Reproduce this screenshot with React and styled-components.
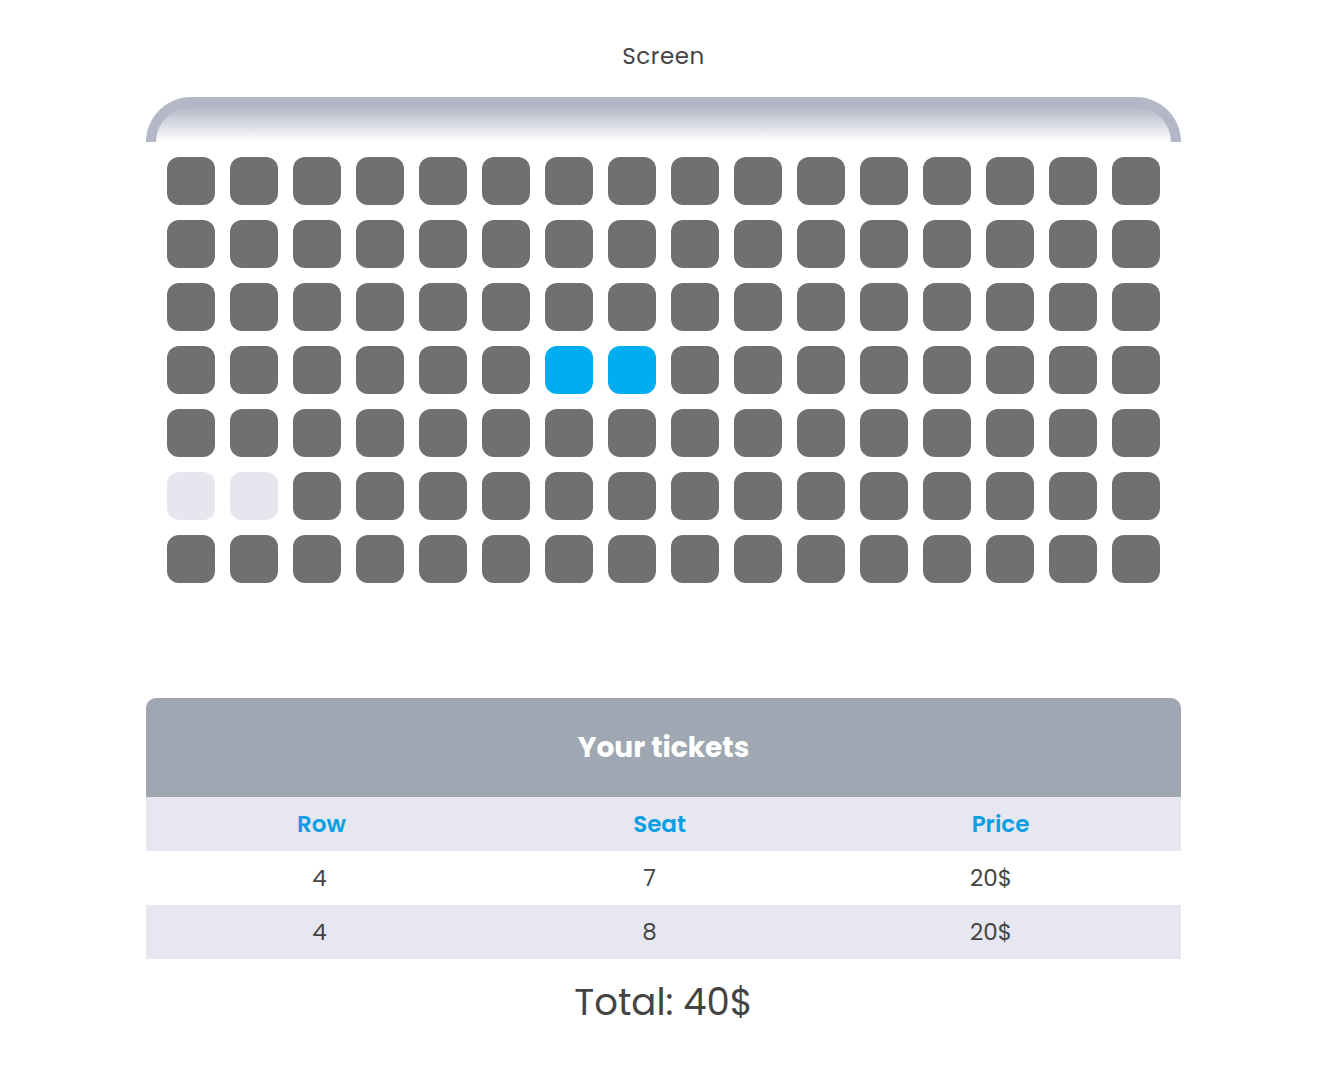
import styled, { createGlobalStyle } from "styled-components";

const GlobalStyle = createGlobalStyle`
  body {
    margin: 0;
    background: #ffffff;
    font-family: Poppins, Inter, "Noto Sans", sans-serif;
    color: #444444;
  }
`;

const Page = styled.div`
  width: 1035px;
  margin: 0 auto;
  padding: 41px 0 40px 4px;
  display: flex;
  flex-direction: column;
  align-items: center;
`;

const ScreenLabel = styled.div`
  font-size: 23px;
  line-height: 30px;
  letter-spacing: 0.5px;
  height: 30px;
`;

const ScreenCurve = styled.div`
  margin-top: 26px;
  width: 100%;
  height: 45px;
  box-sizing: border-box;
  border: 10px solid #b4b7c7;
  border-bottom: none;
  border-radius: 45px 45px 0 0;
  background: linear-gradient(#b4b7c7, #ffffff);
`;

const SeatGrid = styled.div`
  margin-top: 15px;
  display: grid;
  grid-template-columns: repeat(16, 48px);
  grid-auto-rows: 48px;
  gap: 15px;
`;

const seatColors = {
  free: "#707070",
  selected: "#00adef",
  taken: "#e6e6ef",
};

const Seat = styled.div`
  border-radius: 12px;
  background: ${(p) => seatColors[p.$state]};
`;

const Tickets = styled.div`
  margin-top: 115px;
  width: 100%;
  border-radius: 10px 10px 0 0;
  overflow: hidden;
`;

const TicketsTitle = styled.div`
  height: 99px;
  background: #9fa8b2;
  color: #ffffff;
  font-size: 28px;
  font-weight: 700;
  display: flex;
  align-items: center;
  justify-content: center;
`;

const TicketRow = styled.div`
  display: grid;
  grid-template-columns: 1fr 1fr 1fr;
  height: 54px;
  align-items: center;
  background: ${(p) => (p.$shaded ? "#e6e7f0" : "#ffffff")};
  color: ${(p) => (p.$head ? "#0a9ee3" : "#444444")};
  font-size: ${(p) => (p.$head ? 23 : 23)}px;
  font-weight: ${(p) => (p.$head ? 600 : 400)};
`;

const Cell = styled.div`
  text-align: center;
  padding-right: ${(p) => p.$shift || 0}px;
  padding-left: ${(p) => p.$push || 0}px;
`;

const Total = styled.div`
  margin-top: 20px;
  font-size: 37px;
  line-height: 46px;
`;

const ROWS = 7;
const COLS = 16;
const selected = ["4-7", "4-8"];
const taken = ["6-1", "6-2"];

const tickets = [
  { row: 4, seat: 7, price: 20 },
  { row: 4, seat: 8, price: 20 },
];

export default function App() {
  const seats = [];
  for (let r = 1; r <= ROWS; r++) {
    for (let c = 1; c <= COLS; c++) {
      const key = `${r}-${c}`;
      const state = selected.includes(key)
        ? "selected"
        : taken.includes(key)
        ? "taken"
        : "free";
      seats.push(<Seat key={key} $state={state} />);
    }
  }

  const total = tickets.reduce((sum, t) => sum + t.price, 0);

  return (
    <>
      <GlobalStyle />
      <Page>
        <ScreenLabel>Screen</ScreenLabel>
        <ScreenCurve />
        <SeatGrid>{seats}</SeatGrid>
        <Tickets>
          <TicketsTitle>Your tickets</TicketsTitle>
          <TicketRow $head $shaded>
            <Cell $push={6}>Row</Cell>
            <Cell $shift={8}>Seat</Cell>
            <Cell $shift={16}>Price</Cell>
          </TicketRow>
          {tickets.map((t, i) => (
            <TicketRow key={i} $shaded={i % 2 === 1}>
              <Cell $push={2}>{t.row}</Cell>
              <Cell $shift={28}>{t.seat}</Cell>
              <Cell $shift={35}>{t.price}$</Cell>
            </TicketRow>
          ))}
        </Tickets>
        <Total>Total: {total}$</Total>
      </Page>
    </>
  );
}
